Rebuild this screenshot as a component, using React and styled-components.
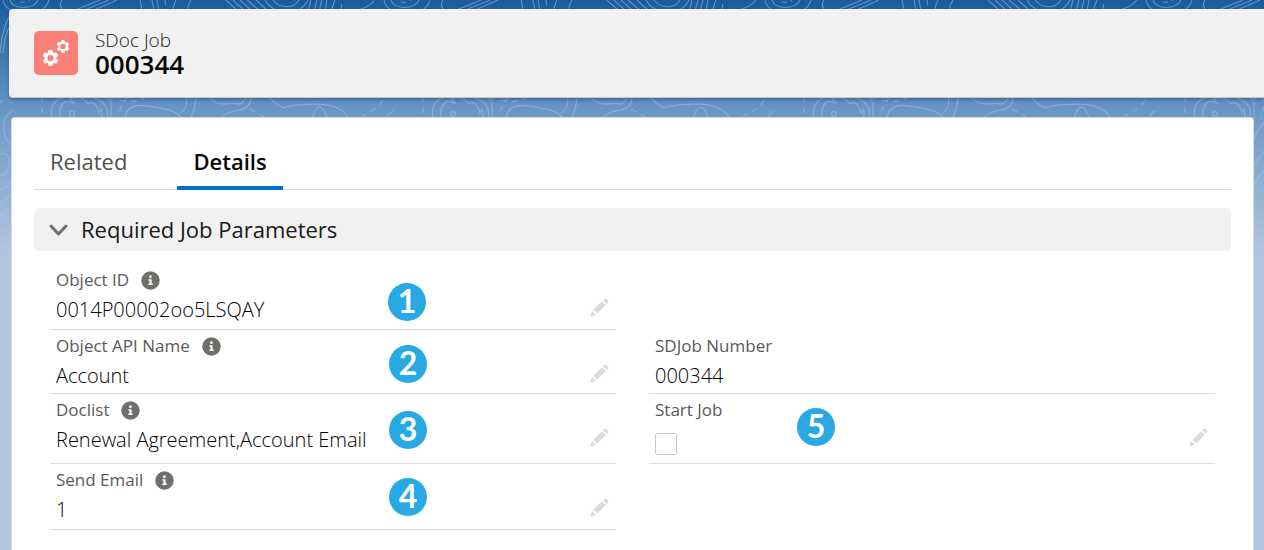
import React from "react";
import styled, { createGlobalStyle } from "styled-components";

const GlobalStyle = createGlobalStyle`
  * {
    box-sizing: border-box;
  }

  body {
    margin: 0;
    font-family: "Open Sans", "Noto Sans", sans-serif;
    color: #080707;
    background: #b0c4df;
    overflow: hidden;
  }
`;

const Page = styled.div`
  position: relative;
  display: flex;
  flex-direction: column;
  min-height: 100vh;
  padding-top: 9px;
  background: linear-gradient(
    #195b9c 0px,
    #1e60a0 10px,
    #6f9ac8 118px,
    #b0c4df 250px
  );
`;

const Backdrop = styled.svg`
  position: absolute;
  top: 0;
  left: 0;
  width: 100%;
  height: 260px;
  fill: none;
`;

const PageHeader = styled.header`
  position: relative;
  display: flex;
  align-items: center;
  gap: 17px;
  height: 89px;
  margin-left: 9px;
  padding-left: 25px;
  background: #f1f1f1;
  border-bottom: 1px solid #c4c9d0;
  border-radius: 4px 0 0 4px;
  box-shadow: 0 2px 3px rgba(0, 0, 0, 0.25);
`;

const ObjectIcon = styled.svg`
  width: 44px;
  height: 44px;
  border-radius: 5px;
  background: #f97f77;
  fill: none;
  stroke: #fff;
`;

const ObjectName = styled.div`
  font-size: 19px;
  line-height: 22px;
  font-weight: 300;
  color: #181818;
`;

const RecordTitle = styled.h1`
  margin: 0;
  font-size: 26px;
  line-height: 26px;
  font-weight: 600;
`;

const Card = styled.main`
  position: relative;
  flex: 1;
  margin: 19px 10px 0 11px;
  padding: 18px 22px 0;
  background: #fff;
  border: 1px solid #dddbda;
  border-bottom: 0;
  border-radius: 4px 4px 0 0;
`;

const Tabs = styled.nav`
  display: flex;
  gap: 34px;
  border-bottom: 1px solid #dddbda;
`;

const Tab = styled.a`
  margin-bottom: -1px;
  padding: 7px 16px;
  border-bottom: 4px solid ${(props) => (props.$active ? "#0070d2" : "transparent")};
  font-size: 22px;
  line-height: 36px;
  font-weight: ${(props) => (props.$active ? 600 : 400)};
  color: ${(props) => (props.$active ? "#080707" : "#514f4d")};
  text-decoration: none;
`;

const SectionToggle = styled.button`
  display: flex;
  align-items: center;
  gap: 13px;
  width: 100%;
  height: 43px;
  margin-top: 18px;
  padding: 0 15px 2px;
  border: 0;
  border-radius: 5px;
  background: #f1f1f1;
  font: inherit;
  font-size: 22px;
  color: #181818;

  svg {
    width: 19px;
    height: 12px;
    margin-top: 2px;
    fill: none;
    stroke: #706e6b;
    stroke-width: 3;
    stroke-linecap: round;
    stroke-linejoin: round;
  }
`;

const Fields = styled.div`
  padding: 13px 16px;
`;

const FieldRow = styled.div`
  display: grid;
  grid-template-columns: 1fr 1fr;
  gap: 33px;
`;

const Field = styled.div`
  position: relative;
  padding: 4px 6px ${(props) => (props.$compact ? 5 : 7)}px;
  border-bottom: 1px solid #dddbda;
`;

const Label = styled.label`
  display: flex;
  align-items: center;
  gap: 12px;
  font-size: 17px;
  line-height: 24px;
  color: #5a5856;

  svg {
    width: 19px;
    height: 19px;
  }
`;

const Value = styled.output`
  display: block;
  margin-top: 6px;
  font-size: 20px;
  line-height: 24px;
  font-weight: 300;
  color: #000;
`;

const Checkbox = styled.input`
  display: block;
  appearance: none;
  width: 22px;
  height: 22px;
  margin: 11px 0 1px;
  border: 1px solid #c9c7c5;
  border-radius: 2px;
  background: #fff;
`;

const EditButton = styled.button`
  position: absolute;
  right: 7px;
  top: 34px;
  display: flex;
  padding: 0;
  border: 0;
  background: none;

  svg {
    width: 19px;
    height: 19px;
    fill: #dddbda;
  }
`;

// numbered callouts lie over the form, each at its own spot
const Callout = styled.span`
  position: absolute;
  left: ${(props) => props.$x}px;
  top: ${(props) => props.$y}px;
  width: 38px;
  height: 38px;
  border-radius: 50%;
  background: #29a9e3;
  color: #fff;
  font-family: Lato, sans-serif;
  font-size: 32px;
  line-height: 36px;
  font-weight: 700;
  text-align: center;
`;

const InfoIcon = () => (
  <svg viewBox="0 0 19 19" aria-hidden="true">
    <circle cx="9.5" cy="9.5" r="9.2" fill="#706e6b" />
    <circle cx="9.4" cy="5.7" r="1.4" fill="#fff" />
    <path d="M7.4 8.2h3.2v4.2h1.1v1.5H7.4v-1.5h1.1V9.7H7.4z" fill="#fff" />
  </svg>
);

const PencilIcon = () => (
  <svg viewBox="0 0 19 19" aria-hidden="true">
    <path d="M3.9 11.3L11.5 3.7Q12 3.2 12.5 3.7L15.3 6.5Q15.8 7 15.3 7.5L7.7 15.1Q7.2 15.6 6.7 15.1L3.9 12.3Q3.4 11.8 3.9 11.3z" />
    <path d="M13.4 2L14.4 1Q15.4 0.2 16.4 1.1L17.9 2.6Q18.8 3.6 18 4.6L17 5.6Q16.7 5.9 16.4 5.6L13.4 2.6Q13.1 2.3 13.4 2z" />
    <path d="M2.4 13.3L5.7 16.6Q5.4 17.3 4.6 17.5L1.3 18.5Q0.3 18.7 0.5 17.7L1.5 14.3Q1.7 13.6 2.4 13.3z" />
  </svg>
);

const gear = (cx, cy, r) => {
  const points = [];
  for (let i = 0; i < 6; i++) {
    const mid = (Math.PI / 3) * i - Math.PI / 2;
    [
      [-0.42, 0.72],
      [-0.2, 1],
      [0.2, 1],
      [0.42, 0.72],
    ].forEach(([turn, k]) => {
      points.push(`${cx + Math.cos(mid + turn) * r * k},${cy + Math.sin(mid + turn) * r * k}`);
    });
  }
  return points.join(" ");
};

const JobIcon = () => (
  <ObjectIcon viewBox="0 0 44 44" aria-hidden="true">
    <g fill="#fff" strokeWidth="1" strokeLinejoin="round">
      <polygon points={gear(16.5, 27, 7.7)} />
      <polygon points={gear(29, 15.5, 6)} />
    </g>
    <g fill="#f97f77" stroke="none">
      <circle cx="16.5" cy="27" r="3.1" />
      <circle cx="29" cy="15.5" r="2.7" />
    </g>
  </ObjectIcon>
);

const Contours = () => (
  <Backdrop aria-hidden="true">
    <defs>
      <pattern id="contours" width="381" height="260" patternUnits="userSpaceOnUse">
        <g stroke="#a9c6ea" strokeOpacity="0.5" strokeWidth="1.1">
          {/* top edge */}
          <path d="M10 0C12 10 34 10 38 0M3 0C4 6 8 9 12 11M49 0Q47 7 40 11M62 0Q58 6 64 11M73 11L100 0M82 11L109 0M92 11L117 0" />
          <path d="M140 0Q142 6 141 11M152 0L154 11M157 0L159 11M176 0Q173 6 173 11M191 0Q187 6 188 11" />
          <path d="M226 0L238 11M233 0L245 11M240 0L252 11M247 0L260 11M256 0L268 11M265 0C272 13 290 15 300 9Q306 5 308 0M273 0C280 9 294 9 299 0" />
          <path d="M311 0L308 11M317 0L314 11M322 0L319 11M327 0L325 11M335 0L331 11" />
          <path d="M20 2Q26 3 30 0M165 0L166 8M341 9L342 3" strokeDasharray="5 4" />
          <path d="M352 11Q368 9 375 0M0 53Q3 22 12 14M3 53Q5 30 12 24" />
          {/* band between the header and the card */}
          <path d="M52 119C48 99 62 95 82 96S110 106 107 119M60 119Q58 106 66 101L74 103L70 99Q82 95 88 104L91 102Q97 104 99 113L101 109Q103 114 101 119" />
          <circle cx="72" cy="114" r="2.5" />
          <path d="M107 95Q109 105 114 96M111 102V119M125 119C126 101 146 105 160 108S176 112 181 117M180 113C186 110 188 103 186 95M196 95Q196 108 190 119" />
          <path d="M208 96Q216 105 226 104T239 104T248 95M251 95Q252 108 239 110T222 118M268 95Q274 104 283 108Q289 105 314 104Q342 104 349 119M312 119Q319 95 328 119" />
          <path d="M42 96V119M128 97Q120 104 118 119M120 100Q133 104 145 98M250 109L264 117M383 100Q378 109 362 116M2 100Q-3 109 -19 116" strokeDasharray="6 5" />
          {/* side edges */}
          <path d="M12 111Q3 116 4 130Q5 141 12 144M-2 154Q10 150 9 164Q8 178 -2 175M-2 190Q7 187 12 182M-2 207Q7 197 12 194M-2 220Q5 210 12 207M-2 240Q7 236 12 236" />
          <path d="M107 160Q110 132 122 122M107 179Q110 160 122 152M107 202Q112 176 122 171" />
          <path d="M108 239Q114 219 122 215M2 222Q7 216 12 215" strokeDasharray="5 4" />
        </g>
      </pattern>
    </defs>
    <rect width="100%" height="260" fill="url(#contours)" />
  </Backdrop>
);

const FormField = ({ id, label, value, info, editable, checkbox, compact, callout }) => (
  <Field $compact={compact}>
    <Label htmlFor={id}>
      {label}
      {info && <InfoIcon />}
    </Label>
    {checkbox ? <Checkbox id={id} type="checkbox" /> : <Value id={id}>{value}</Value>}
    {editable && (
      <EditButton type="button" aria-label={`Edit ${label}`}>
        <PencilIcon />
      </EditButton>
    )}
    {callout && (
      <Callout $x={callout.x} $y={callout.y}>
        {callout.number}
      </Callout>
    )}
  </Field>
);

const rows = [
  [
    { id: "object-id", label: "Object ID", value: "0014P00002oo5LSQAY", info: true, editable: true, callout: { number: 1, x: 338, y: 19 } },
  ],
  [
    { id: "api-name", label: "Object API Name", value: "Account", info: true, editable: true, compact: true, callout: { number: 2, x: 339, y: 15 } },
    { id: "job-number", label: "SDJob Number", value: "000344", compact: true },
  ],
  [
    { id: "doclist", label: "Doclist", value: "Renewal Agreement,Account Email", info: true, editable: true, callout: { number: 3, x: 339, y: 17 } },
    { id: "start-job", label: "Start Job", checkbox: true, editable: true, callout: { number: 5, x: 148, y: 14 } },
  ],
  [
    { id: "send-email", label: "Send Email", value: "1", info: true, editable: true, callout: { number: 4, x: 339, y: 14 } },
  ],
];

const App = () => (
  <>
    <GlobalStyle />
    <Page>
      <Contours />
      <PageHeader>
        <JobIcon />
        <div>
          <ObjectName>SDoc Job</ObjectName>
          <RecordTitle>000344</RecordTitle>
        </div>
      </PageHeader>
      <Card>
        <Tabs>
          <Tab href="#related">Related</Tab>
          <Tab href="#details" $active>
            Details
          </Tab>
        </Tabs>
        <SectionToggle type="button" aria-expanded="true">
          <svg viewBox="0 0 19 12" aria-hidden="true">
            <path d="M2 2L9.5 10L17 2" />
          </svg>
          Required Job Parameters
        </SectionToggle>
        <Fields>
          {rows.map((row) => (
            <FieldRow key={row[0].id}>
              {row.map((field) => (
                <FormField key={field.id} {...field} />
              ))}
            </FieldRow>
          ))}
        </Fields>
      </Card>
    </Page>
  </>
);

export default App;
